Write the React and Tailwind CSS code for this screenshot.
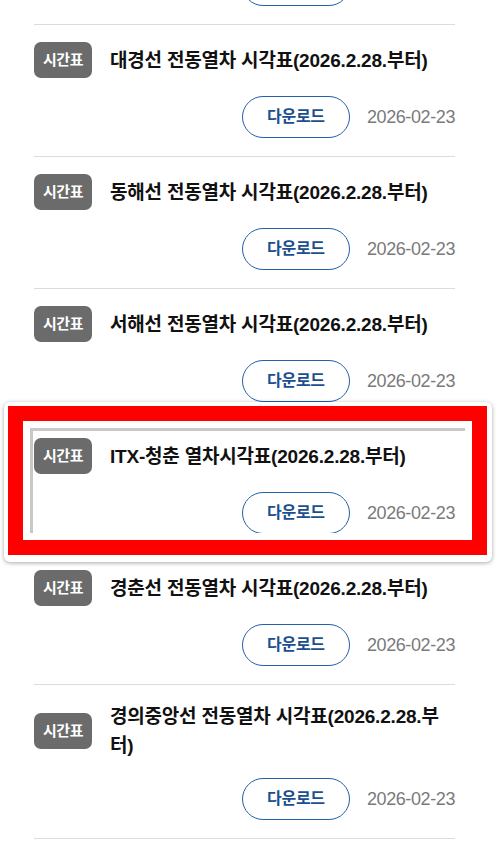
const rows = [
  { title: "경부선 전동열차 시각표(2026.2.28.부터)", date: "2026-02-23" },
  { title: "대경선 전동열차 시각표(2026.2.28.부터)", date: "2026-02-23" },
  { title: "동해선 전동열차 시각표(2026.2.28.부터)", date: "2026-02-23" },
  { title: "서해선 전동열차 시각표(2026.2.28.부터)", date: "2026-02-23" },
  { title: "ITX-청춘 열차시각표(2026.2.28.부터)", date: "2026-02-23" },
  { title: "경춘선 전동열차 시각표(2026.2.28.부터)", date: "2026-02-23" },
  { title: "경의중앙선 전동열차 시각표(2026.2.28.부터)", date: "2026-02-23" },
];

const font = { fontFamily: '"Liberation Sans", "Noto Sans CJK KR", sans-serif' };

function RowBody({ title, date }) {
  return (
    <>
      <div className="flex items-center">
        <span className="flex h-[36px] w-[58px] shrink-0 items-center justify-center rounded-[7px] bg-[#6b6b6b] text-[15px] font-bold tracking-[-0.5px] text-white">
          시간표
        </span>
        <p className="ml-[18px] flex-1 text-[19px] font-bold leading-[29px] tracking-[-0.2px] text-[#111]">
          {title}
        </p>
      </div>
      <div className="mt-[18px] flex items-center justify-end gap-[17px]">
        <button className="h-[42px] w-[108px] rounded-full border-[1.5px] border-[#2461a8] text-[16px] font-bold tracking-[-0.3px] text-[#1c4f90]">
          다운로드
        </button>
        <span className="text-[18px] tracking-[-0.4px] text-[#7a7a7a]">{date}</span>
      </div>
    </>
  );
}

export default function App() {
  return (
    <div className="relative h-[857px] w-[500px] overflow-hidden bg-white" style={font}>
      <ul className="mt-[-107px] pl-[34px] pr-[45px]">
        {rows.map((r, i) => (
          <li key={i} className="border-b border-[#dcdcdc] pt-[17px] pb-[18px]">
            <RowBody {...r} />
          </li>
        ))}
      </ul>

      {/* highlighted item overlay */}
      <div className="absolute left-[4px] top-[402px] h-[160px] w-[488px] rounded-[6px] bg-white pl-[4px] pt-[4px] shadow-[0_1px_4px_rgba(0,0,0,0.35)]">
        <div className="h-[149px] w-[479px] border-[15px] border-[#ff0000] bg-white p-[7px]">
          <div className="h-[105px] overflow-hidden">
            <div className="border-l-[3px] border-t-[3px] border-[#c8c8c8] pl-[1px] pr-[10px] pt-[7px]">
              <RowBody title="ITX-청춘 열차시각표(2026.2.28.부터)" date="2026-02-23" />
            </div>
          </div>
        </div>
      </div>
    </div>
  );
}
